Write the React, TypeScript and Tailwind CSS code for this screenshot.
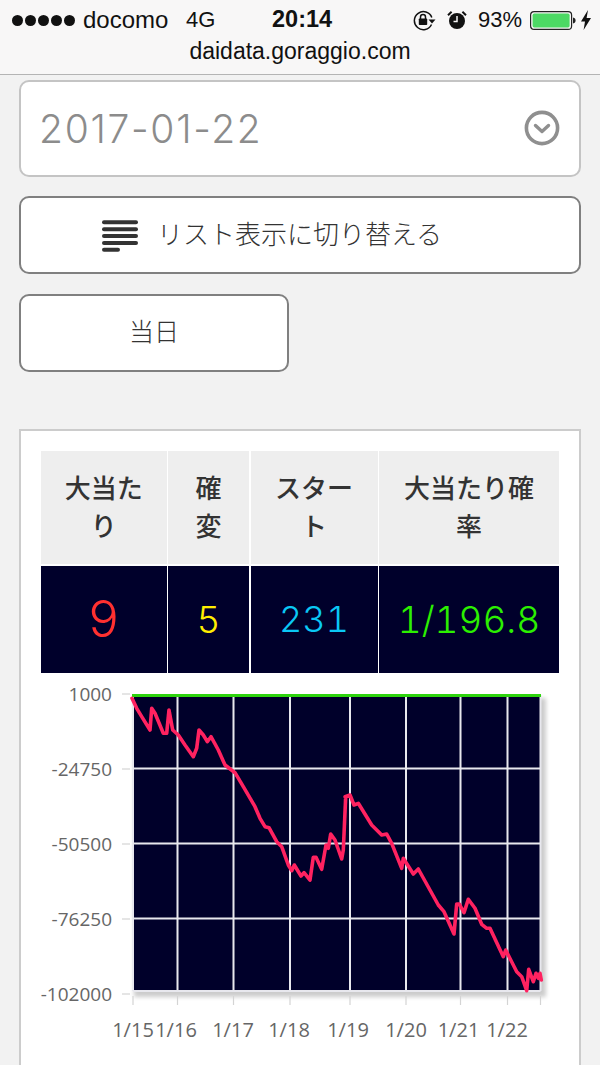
import React from "react";

const CJK = '"Liberation Sans","Noto Sans CJK JP",sans-serif';

const trace1: [number, number][] = [[36,55],[50,85],[65,110],[90,150],[95,85],[105,100],[130,160],[140,160],[147,90],[158,150],[175,165],[195,195],[220,230],[230,205],[237,150],[250,165],[262,185],[273,170],[295,210],[315,255],[345,278],[370,320],[405,380],[420,415],[435,440],[447,443],[470,485],[485,500],[505,555],[515,572],[523,555],[543,588],[552,578],[570,600],[580,532],[588,532],[605,568],[618,495],[625,505],[632,462],[645,480],[665,537],[670,510],[677,350]];
const trace2: [number, number][] = [[15,350],[30,345],[42,375],[55,370],[95,435],[125,465],[140,462],[155,490],[185,565],[190,535],[220,582],[235,567],[295,675],[312,695],[342,762],[350,672],[358,672],[372,698],[385,658],[405,685],[425,733],[440,745],[450,745],[490,830],[497,810],[530,875],[545,890],[560,932],[566,868],[580,905],[588,880],[595,895],[600,880],[604,900]];
const pts = [
  ...trace1.map(([x, y]) => [120 + x / 3, 680 + y / 3]),
  ...trace2.map(([x, y]) => [340 + x / 3, 680 + y / 3]),
]
  .map(([x, y]) => `${(x - 20).toFixed(1)},${(y - 680).toFixed(1)}`)
  .join(" ");

const vLines = [133, 177.5, 233.5, 290, 350, 406, 460.5, 507.5, 540.5];
const hLines = [768.5, 843.5, 918.5];
const yLabels: [string, number][] = [["1000", 694], ["-24750", 769], ["-50500", 844], ["-76250", 919], ["-102000", 994]];
const xLabels: [string, number][] = [["1/15", 133], ["1/16", 176], ["1/17", 233], ["1/18", 289], ["1/19", 348], ["1/20", 406], ["1/21", 458.5], ["1/22", 507]];

function Chart() {
  return (
    <svg width="560" height="385" viewBox="0 0 560 385" className="block">
      <defs>
        <filter id="soft" x="-5%" y="-5%" width="110%" height="110%">
          <feGaussianBlur stdDeviation="0.7" />
        </filter>
        <filter id="shadow" x="-5%" y="-5%" width="110%" height="110%">
          <feGaussianBlur stdDeviation="2" />
        </filter>
      </defs>
      <rect x="114" y="18" width="412" height="299" fill="#000" opacity="0.2" filter="url(#shadow)" />
      <g filter="url(#soft)">
        <rect x="113" y="15" width="407.5" height="296" fill="#00002b" />
        {vLines.map((x) => (
          <line key={x} x1={x - 20} x2={x - 20} y1="15" y2="311" stroke="#e8e8ee" strokeWidth="2" />
        ))}
        {hLines.map((y) => (
          <line key={y} x1="113" x2="520.5" y1={y - 680} y2={y - 680} stroke="#e8e8ee" strokeWidth="2" />
        ))}
        <line x1="113" x2="520.5" y1="311" y2="311" stroke="#e8e8ee" strokeWidth="2" />
        <line x1="112" x2="521" y1="15.5" y2="15.5" stroke="#2fd40f" strokeWidth="3" />
        {vLines.map((x) => (
          <line key={`t${x}`} x1={x - 20} x2={x - 20} y1="316" y2="325" stroke="#d4d4d4" strokeWidth="1.2" />
        ))}
        {yLabels.map(([l, y]) => (
          <line key={`y${l}`} x1="102" x2="110" y1={y - 680} y2={y - 680} stroke="#d4d4d4" strokeWidth="1.2" />
        ))}
        <polyline points={pts} fill="none" stroke="#ff2260" strokeWidth="3.6" strokeLinejoin="round" strokeLinecap="round" />
      </g>
      {yLabels.map(([l, y]) => (
        <text key={l} x="92" y={y - 680 + 7} textAnchor="end" fontSize="19" fill="#666" fontFamily='"Open Sans",sans-serif'>
          {l}
        </text>
      ))}
      {xLabels.map(([l, x]) => (
        <text key={l} x={x - 20} y="357" textAnchor="middle" fontSize="20" fill="#666" fontFamily='"Open Sans",sans-serif'>
          {l}
        </text>
      ))}
    </svg>
  );
}

function LockIcon() {
  return (
    <svg width="23" height="21" viewBox="0 0 23 21">
      <path d="M18.5 14.5A9 9 0 1 1 18.8 7.5" fill="none" stroke="#111" strokeWidth="1.5" />
      <path d="M15.5 9.5h7l-3.5 4z" fill="#111" />
      <rect x="5.8" y="8.5" width="8.4" height="6.5" rx="0.8" fill="#111" />
      <path d="M7.5 9V7a2.5 2.5 0 0 1 5 0v2" fill="none" stroke="#111" strokeWidth="1.5" />
    </svg>
  );
}

function AlarmIcon() {
  return (
    <svg width="20" height="20" viewBox="0 0 20 20">
      <circle cx="10" cy="11" r="8" fill="#111" />
      <path d="M10 6v5.5H6.5" fill="none" stroke="#f8f7f7" strokeWidth="1.5" />
      <path d="M1 5.2 4.6 1.8M19 5.2 15.4 1.8" stroke="#111" strokeWidth="2" />
    </svg>
  );
}

function Battery() {
  return (
    <svg width="46" height="19" viewBox="0 0 46 19">
      <rect x="0.6" y="0.6" width="41" height="17.8" rx="3.5" fill="none" stroke="#222" strokeWidth="1.2" />
      <rect x="2.6" y="2.6" width="37" height="13.8" rx="1.6" fill="#4cd964" />
      <path d="M43 6.5c1.8.4 2.6 1.4 2.6 3s-.8 2.6-2.6 3z" fill="#222" />
    </svg>
  );
}

function Bolt() {
  return (
    <svg width="10" height="20" viewBox="0 0 10 20">
      <path d="M7 0 0 11.5h4L2.6 20 10 8H5.6z" fill="#111" />
    </svg>
  );
}

function ListIcon() {
  return (
    <svg width="36" height="32" viewBox="0 0 36 32">
      {[2.3, 9.3, 16, 23].map((y) => (
        <line key={y} x1="2" x2="34" y1={y} y2={y} stroke="#333" strokeWidth="4" strokeLinecap="round" />
      ))}
      <line x1="2" x2="16" y1="29.7" y2="29.7" stroke="#333" strokeWidth="4" strokeLinecap="round" />
    </svg>
  );
}

function ChevronCircle() {
  return (
    <svg width="36" height="36" viewBox="0 0 36 36">
      <circle cx="18" cy="18" r="15.6" fill="none" stroke="#8f8f8f" strokeWidth="3.6" />
      <path d="M11.5 15.5 18 21.5l6.5-6" fill="none" stroke="#8f8f8f" strokeWidth="3.4" strokeLinecap="round" strokeLinejoin="round" />
    </svg>
  );
}

const cols = [
  { h: "大当たり", v: "9", c: "text-[#ff3030]", s: "text-[50px]" },
  { h: "確変", v: "5", c: "text-[#ffee00]", s: "text-[37px]" },
  { h: "スタート", v: "231", c: "text-[#0ac8f5]", s: "text-[36px]" },
  { h: "大当たり確率", v: "1/196.8", c: "text-[#2cf000]", s: "text-[37px]" },
];

export default function App() {
  return (
    <div className="w-[600px] h-[1065px] overflow-hidden bg-[#f2f2f2]" style={{ fontFamily: CJK }}>
      <header className="h-[75px] bg-[#f8f7f7] border-b border-[#b4b4b4] text-[#111]">
        <div className="h-[40px] flex items-center pl-[12px] font-['Liberation_Sans']">
          <div className="flex gap-[2px] w-[71px]">
            {[0, 1, 2, 3, 4].map((i) => (
              <span key={i} className="block w-[11px] h-[11px] rounded-full bg-[#111]" />
            ))}
          </div>
          <span className="text-[24px] leading-none w-[103px]">docomo</span>
          <span className="text-[22px] leading-none w-[86px]">4G</span>
          <span className="text-[23.5px] leading-none font-bold w-[141px]">20:14</span>
          <LockIcon />
          <span className="w-[11px]" />
          <AlarmIcon />
          <span className="text-[22px] leading-none ml-[11px] w-[52px]">93%</span>
          <Battery />
          <span className="ml-[5px]"><Bolt /></span>
        </div>
        <div className="h-[23px] flex items-center justify-center text-[23px] leading-none font-['Liberation_Sans']">
          daidata.goraggio.com
        </div>
      </header>

      <main className="px-[19px] pt-[5px]">
        <div className="h-[97px] bg-white border-2 border-[#c4c4c4] rounded-[10px] flex items-center justify-between pl-[18px] pr-[19px] pb-[1px]">
          <span className="text-[39px] leading-none tracking-[1.7px] text-[#8c8c8c] font-['Inter'] font-light">2017-01-22</span>
          <ChevronCircle />
        </div>
        <button className="mt-[19px] w-full h-[78px] bg-white border-2 border-[#808080] rounded-[10px] flex items-center justify-center gap-[19px] pr-[56px]">
          <span className="mt-[2px]"><ListIcon /></span>
          <span className="text-[26px] whitespace-nowrap text-[#333] font-light">リスト表示に切り替える</span>
        </button>
        <button className="block mt-[20px] w-[270px] h-[78px] bg-white border-2 border-[#808080] rounded-[10px] text-[25px] text-[#333] font-light">
          当日
        </button>

        <section className="mt-[57px] bg-white border-2 border-[#cccccc] h-[700px] pt-[20px]">
          <div className="mx-[20px] w-[518px] grid grid-cols-[125.5px_81px_127px_180px] gap-[1.5px]">
            {cols.map((c) => (
              <div key={c.h} className="h-[113px] bg-[#eeeeee] flex items-center justify-center px-[16px] text-center text-[26px] leading-[38px] font-medium text-[#333]">
                <span className="block">{c.h}</span>
              </div>
            ))}
            {cols.map((c) => (
              <div key={c.v} className={`h-[107px] bg-[#00002b] flex items-center justify-center font-['Inter'] font-light leading-none tabular-nums ${c.c} ${c.s}`}>
                {c.v}
              </div>
            ))}
          </div>
          <div className="-ml-[1px] mt-[7px]">
            <Chart />
          </div>
        </section>
      </main>
    </div>
  );
}
